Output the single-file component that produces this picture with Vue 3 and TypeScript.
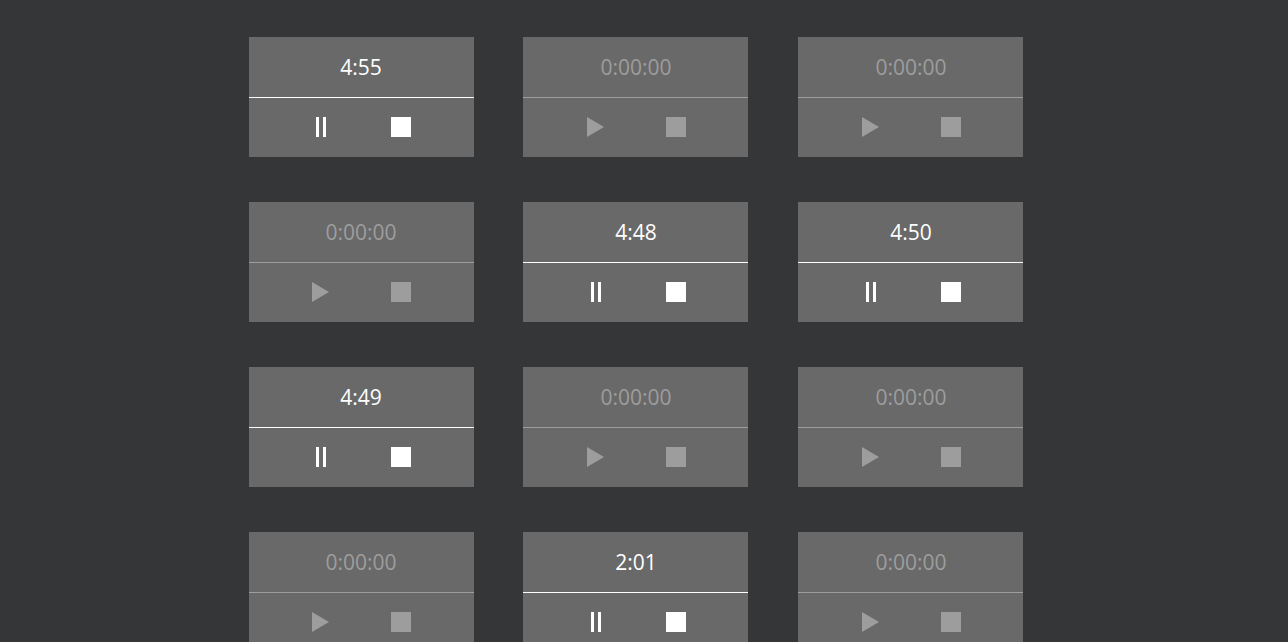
<script setup lang="ts">
import { computed, ref } from 'vue'

interface Timer {
  id: number
  seconds: number
  running: boolean
}

const initial: number[] = [295, 0, 0, 0, 288, 290, 289, 0, 0, 0, 121, 0]

const timers = ref<Timer[]>(
  initial.map((seconds, index) => ({ id: index + 1, seconds, running: seconds > 0 })),
)

function format(seconds: number): string {
  if (seconds === 0) return '0:00:00'
  const h = Math.floor(seconds / 3600)
  const m = Math.floor((seconds % 3600) / 60)
  const s = String(seconds % 60).padStart(2, '0')
  return h > 0 ? `${h}:${String(m).padStart(2, '0')}:${s}` : `${m}:${s}`
}

const cards = computed(() => timers.value.map((t) => ({ ...t, label: format(t.seconds) })))

function toggle(index: number): void {
  const timer = timers.value[index]
  if (timer.seconds > 0) timer.running = !timer.running
}

function stop(index: number): void {
  timers.value[index].seconds = 0
  timers.value[index].running = false
}
</script>

<template>
  <main class="page">
    <ul class="grid">
      <li v-for="(card, index) in cards" :key="card.id" class="cell">
        <section class="card" :class="{ idle: card.seconds === 0 }" :aria-label="`Timer ${card.id}`">
          <time class="time">{{ card.label }}</time>
          <div class="controls">
            <button
              type="button"
              class="control"
              :aria-label="card.running ? 'Pause' : 'Start'"
              @click="toggle(index)"
            >
              <svg v-if="card.running" width="10" height="20" viewBox="0 0 10 20" aria-hidden="true">
                <path d="M0 0h3v20H0zM7 0h3v20H7z" />
              </svg>
              <svg v-else width="18" height="20" viewBox="0 0 18 20" aria-hidden="true">
                <path d="M0 0L17 10L0 20z" />
              </svg>
            </button>
            <button type="button" class="control" aria-label="Stop" @click="stop(index)">
              <svg width="20" height="20" viewBox="0 0 20 20" aria-hidden="true">
                <path d="M0 0h20v20H0z" />
              </svg>
            </button>
          </div>
        </section>
      </li>
    </ul>
  </main>
</template>

<style>
body {
  margin: 0;
  background: #353638;
}
</style>

<style scoped>
.page {
  box-sizing: border-box;
  min-height: 100vh;
  padding: 37px 16px 0 0;
  background: #353638;
  font-family: 'Segoe UI', 'Open Sans', 'Noto Sans', sans-serif;
}

.grid {
  display: grid;
  grid-template-columns: repeat(3, 33.33%);
  row-gap: 45px;
  max-width: 825px;
  margin: 0 auto;
  padding: 0;
  list-style: none;
}

.cell {
  padding-left: 25px;
}

.card {
  width: 225px;
  color: #fff;
  background: #696969;
}

.card.idle {
  color: #9d9d9d;
}

.time {
  display: block;
  border-bottom: 1px solid currentColor;
  font-size: 21px;
  line-height: 60px;
  text-align: center;
}

.controls {
  display: flex;
  justify-content: center;
}

.control {
  display: flex;
  align-items: center;
  justify-content: center;
  width: 80px;
  padding: 19px 0 20px;
  border: 0;
  background: none;
  color: inherit;
  cursor: pointer;
}

.control svg {
  display: block;
  fill: currentColor;
}
</style>
